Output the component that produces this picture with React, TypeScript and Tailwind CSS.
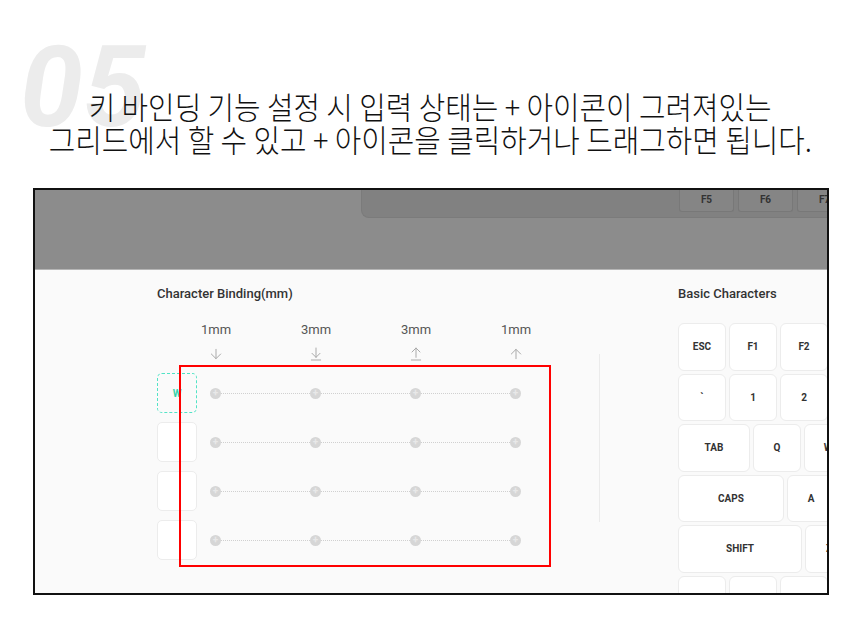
import { ArrowDown, ArrowDownToLine, ArrowUpFromLine, ArrowUp } from "lucide-react";

const labels = ["1mm", "3mm", "3mm", "1mm"];

function Dot() {
  return (
    <div className="flex h-[11px] w-[11px] shrink-0 items-center justify-center rounded-full bg-[#d6d6d6]">
      <span className="text-[10px] leading-none font-bold text-[#e8e8e8]">+</span>
    </div>
  );
}

function BindingRow({ active }: { active?: boolean }) {
  return (
    <div className="flex h-[40px] items-center">
      {active ? (
        <div className="flex h-[40px] w-[40px] items-center justify-center rounded-[5px] border border-dashed border-[#52e3c6]">
          <span className="text-[10px] font-bold text-[#34d3ac]">W</span>
        </div>
      ) : (
        <div className="h-[40px] w-[40px] rounded-[5px] border border-[#ececec] bg-white" />
      )}
      <div className="ml-[13px] flex w-[311px] items-center">
        <Dot />
        <div className="flex-1 border-t border-dotted border-[#d0d0d0]" />
        <Dot />
        <div className="flex-1 border-t border-dotted border-[#d0d0d0]" />
        <Dot />
        <div className="flex-1 border-t border-dotted border-[#d0d0d0]" />
        <Dot />
      </div>
    </div>
  );
}

function Key({ label, w = "w-[48px]" }: { label: string; w?: string }) {
  return (
    <div className={`${w} flex h-[47.5px] shrink-0 items-center justify-center rounded-[6px] border border-[#ececec] bg-white`}>
      <span className="text-[10px] font-bold text-[#333]">{label}</span>
    </div>
  );
}

export default function App() {
  return (
    <div className="relative h-[639px] w-[860px] overflow-hidden bg-white" style={{ fontFamily: "Roboto, 'Noto Sans', sans-serif" }}>
      {/* big step number behind the heading */}
      <div className="absolute left-[20px] top-[31px] text-[113px] leading-none font-bold italic text-[#ececec]">05</div>

      <div className="relative flex h-[188px] flex-col items-center pt-[89px] text-[#111]" style={{ fontFamily: "'Noto Sans CJK KR', sans-serif" }}>
        <div className="scale-x-[0.93] text-[31px] leading-[33px] font-light whitespace-nowrap">키 바인딩 기능 설정 시 입력 상태는 + 아이콘이 그려져있는</div>
        <div className="scale-x-[0.93] text-[31px] leading-[33px] font-light whitespace-nowrap">그리드에서 할 수 있고 + 아이콘을 클릭하거나 드래그하면 됩니다.</div>
      </div>

      <div className="ml-[33px] flex h-[407px] w-[796px] flex-col overflow-hidden border-2 border-[#111]">
        {/* dimmed keyboard strip */}
        <div className="h-[80px] shrink-0 border-b border-[#b5b5b5] bg-[#8c8c8c] pl-[326px]">
          <div className="flex h-[28px] rounded-bl-[8px] border-b border-l border-[#7b7b7b] bg-[#818181] pl-[317px]">
            {["F5", "F6", "F7"].map((k) => (
              <div key={k} className="mr-[4px] flex h-[22px] w-[55px] shrink-0 justify-center rounded-b-[3px] border border-t-0 border-[#787878] bg-[#858585] pt-[2px]">
                <span className="text-[10px] font-bold text-[#333]">{k}</span>
              </div>
            ))}
          </div>
        </div>

        <div className="relative flex flex-1 bg-[#fafafa] pl-[122px]">
          {/* left: character binding */}
          <div className="w-[442px] shrink-0 pt-[16px]">
            <div className="text-[13px] leading-[16px] font-medium text-[#333]">Character Binding(mm)</div>
            <div className="mt-[20px] flex pl-[9px]">
              {labels.map((l, i) => (
                <div key={i} className="w-[100px] text-center text-[13px] leading-[16px] text-[#555]">{l}</div>
              ))}
            </div>
            <div className="mt-[8px] flex pl-[9px] text-[#aaaaaa]">
              <div className="flex w-[100px] justify-center"><ArrowDown size={16} strokeWidth={1.5} /></div>
              <div className="flex w-[100px] justify-center"><ArrowDownToLine size={16} strokeWidth={1.5} /></div>
              <div className="flex w-[100px] justify-center"><ArrowUpFromLine size={16} strokeWidth={1.5} /></div>
              <div className="flex w-[100px] justify-center"><ArrowUp size={16} strokeWidth={1.5} /></div>
            </div>
            <div className="mt-[11px] flex flex-col gap-[9px]">
              <BindingRow active />
              <BindingRow />
              <BindingRow />
              <BindingRow />
            </div>
          </div>

          <div className="mt-[84px] h-[168px] w-px shrink-0 bg-[#ebebeb]" />

          {/* right: basic characters */}
          <div className="ml-[78px] shrink-0 pt-[16px]">
            <div className="text-[13px] leading-[16px] font-medium text-[#333]">Basic Characters</div>
            <div className="mt-[21px] flex flex-col gap-[3px]">
              <div className="flex gap-[3px]"><Key label="ESC" /><Key label="F1" /><Key label="F2" /></div>
              <div className="flex gap-[3px]"><Key label="`" /><Key label="1" /><Key label="2" /></div>
              <div className="flex gap-[3px]"><Key label="TAB" w="w-[72px]" /><Key label="Q" /><Key label="W" /></div>
              <div className="flex gap-[3px]"><Key label="CAPS" w="w-[106px]" /><Key label="A" /></div>
              <div className="flex gap-[3px]"><Key label="SHIFT" w="w-[124px]" /><Key label="Z" /></div>
              <div className="flex gap-[3px]"><Key label="" /><Key label="" /><Key label="" /></div>
            </div>
          </div>

          {/* highlight box drawn over the grid */}
          <div className="absolute left-[144px] top-[95px] h-[202px] w-[372px] border-2 border-[#ff0000]" />
        </div>
      </div>
    </div>
  );
}
